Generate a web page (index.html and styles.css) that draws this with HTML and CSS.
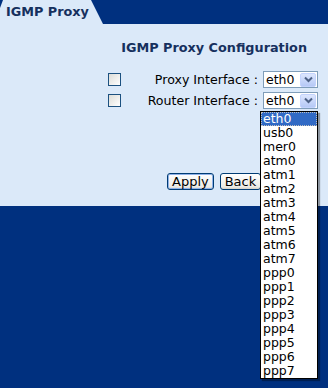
FILE: index.html
```html
<!DOCTYPE html>
<html>
<head>
<meta charset="utf-8">
<link rel="stylesheet" href="styles.css">
</head>
<body>
<div class="page">
  <div class="tabbar"><div class="tab">IGMP Proxy</div></div>
  <div class="panel">
    <div class="title">IGMP Proxy Configuration</div>
    <div class="form">
      <div class="row">
        <span class="check"></span>
        <span class="label">Proxy Interface :</span>
        <span class="select"><span class="val">eth0</span><span class="arrow"><svg width="9" height="7" viewBox="0 0 9 7"><path d="M1 1.5 L4.5 5 L8 1.5" fill="none" stroke="#4d6185" stroke-width="2"/></svg></span></span>
      </div>
      <div class="row">
        <span class="check"></span>
        <span class="label">Router Interface :</span>
        <span class="select"><span class="val">eth0</span><span class="arrow"><svg width="9" height="7" viewBox="0 0 9 7"><path d="M1 1.5 L4.5 5 L8 1.5" fill="none" stroke="#4d6185" stroke-width="2"/></svg></span></span>
      </div>
    </div>
    <div class="buttons">
      <button class="btn default">Apply</button>
      <button class="btn">Back</button>
    </div>
  </div>
  <div class="footer"></div>
  <ul class="dropdown">
    <li class="sel">eth0</li>
    <li>usb0</li>
    <li>mer0</li>
    <li>atm0</li>
    <li>atm1</li>
    <li>atm2</li>
    <li>atm3</li>
    <li>atm4</li>
    <li>atm5</li>
    <li>atm6</li>
    <li>atm7</li>
    <li>ppp0</li>
    <li>ppp1</li>
    <li>ppp2</li>
    <li>ppp3</li>
    <li>ppp4</li>
    <li>ppp5</li>
    <li>ppp6</li>
    <li>ppp7</li>
  </ul>
</div>
</body>
</html>
```

FILE: styles.css
```css
html, body {
  margin: 0;
  padding: 0;
}
body {
  background: #00307f;
  font-family: "DejaVu Sans", Verdana, sans-serif;
  font-size: 12.6px;
  width: 328px;
  height: 388px;
  overflow: hidden;
}
.page {
  position: relative;
  width: 328px;
  height: 388px;
}
.tabbar {
  height: 24px;
  background: #00307f;
}
.tab {
  width: 103px;
  height: 24px;
  background: #dbe9f9;
  clip-path: polygon(3px 0, 91px 0, 103px 100%, 0 100%, 0 8px);
  color: #16305e;
  font-weight: bold;
  font-size: 12.8px;
  line-height: 24px;
  padding-left: 6px;
  box-sizing: border-box;
  white-space: nowrap;
}
.panel {
  height: 182px;
  background: #dbe9f9;
  box-sizing: border-box;
  padding-top: 16px;
}
.title {
  text-align: right;
  padding-right: 21px;
  font-weight: bold;
  font-size: 12.8px;
  color: #16305e;
  line-height: 16px;
}
.form {
  margin-top: 15px;
  display: flex;
  flex-direction: column;
  gap: 4px;
}
.row {
  display: grid;
  grid-template-columns: 108px 13px 1fr 55px 10px;
  align-items: center;
  height: 17px;
}
.check {
  grid-column: 2;
  width: 13px;
  height: 13px;
  box-sizing: border-box;
  border: 1px solid #1c5180;
  background: linear-gradient(135deg, #dcdcd7, #ffffff);
}
.label {
  grid-column: 3;
  text-align: right;
  padding-right: 5px;
  color: #000;
  white-space: nowrap;
}
.select {
  grid-column: 4;
  height: 17px;
  box-sizing: border-box;
  border: 1px solid #7f9db9;
  background: #fff;
  display: flex;
  align-items: center;
  justify-content: space-between;
  padding: 0 1px 0 2px;
  font-size: 12.5px;
}
.val {
  color: #000;
}
.arrow {
  width: 16px;
  height: 14px;
  border-radius: 2px;
  background: linear-gradient(#dce6fd, #b6c9f6);
  border: 1px solid #c3d3fd;
  box-sizing: border-box;
  display: flex;
  align-items: center;
  justify-content: center;
}
.buttons {
  margin-top: 64px;
  padding-left: 167px;
  display: flex;
  gap: 6px;
}
.btn {
  font-family: "DejaVu Sans", Verdana, sans-serif;
  font-size: 13px;
  height: 17px;
  padding: 0 4px;
  line-height: 13px;
  border: 1px solid #003c74;
  border-radius: 3px;
  background: linear-gradient(#ffffff, #ecebe6 85%, #d6d0c5);
  color: #000;
}
.btn.default {
  box-shadow: inset 0 0 0 1px #8fb1e8;
}
.footer {
  height: 182px;
}
.dropdown {
  position: absolute;
  left: 260px;
  top: 111px;
  width: 58px;
  margin: 0;
  padding: 0;
  list-style: none;
  background: #fff;
  border: 1px solid #000;
  box-sizing: border-box;
  box-shadow: 2px 2px 1px rgba(0,0,0,0.35);
}
.dropdown li {
  height: 14px;
  line-height: 14px;
  padding-left: 2px;
  color: #000;
  font-size: 12.5px;
}
.dropdown li.sel {
  background: #316ac5;
  color: #fff;
  outline: 1px dotted #c0c0c0;
  outline-offset: -1px;
}
```
